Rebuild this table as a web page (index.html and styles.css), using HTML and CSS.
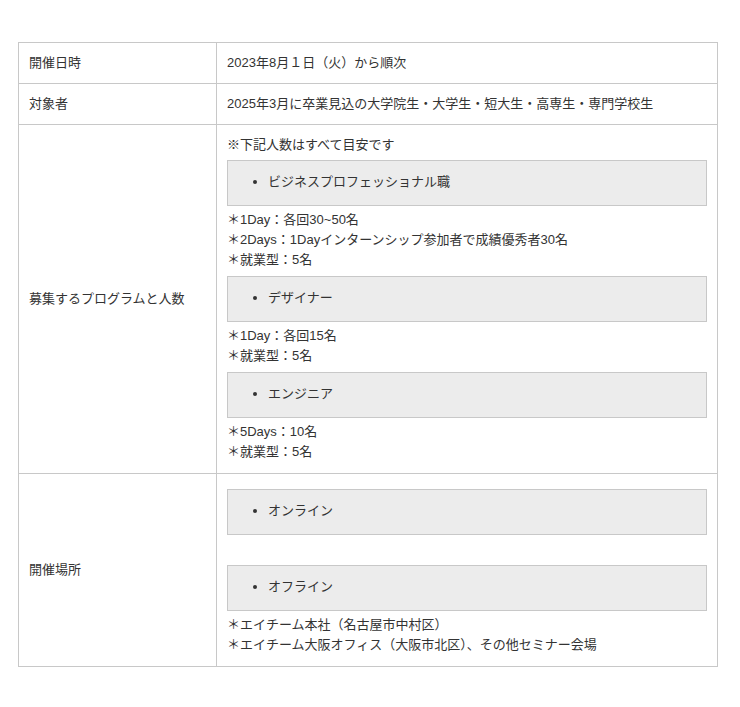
FILE: index.html
```html
<!DOCTYPE html>
<html lang="ja">
<head>
<meta charset="utf-8">
<link rel="stylesheet" href="styles.css">
</head>
<body>
<table class="info">
  <tr>
    <th>開催日時</th>
    <td>2023年8月１日（火）から順次</td>
  </tr>
  <tr>
    <th>対象者</th>
    <td>2025年3月に卒業見込の大学院生・大学生・短大生・高専生・専門学校生</td>
  </tr>
  <tr>
    <th>募集するプログラムと人数</th>
    <td class="rich">
      <p class="note">※下記人数はすべて目安です</p>
      <ul class="box"><li>ビジネスプロフェッショナル職</li></ul>
      <p>＊1Day：各回30~50名<br>＊2Days：1Dayインターンシップ参加者で成績優秀者30名<br>＊就業型：5名</p>
      <ul class="box"><li>デザイナー</li></ul>
      <p>＊1Day：各回15名<br>＊就業型：5名</p>
      <ul class="box"><li>エンジニア</li></ul>
      <p>＊5Days：10名<br>＊就業型：5名</p>
    </td>
  </tr>
  <tr>
    <th>開催場所</th>
    <td class="rich">
      <ul class="box first"><li>オンライン</li></ul>
      <p class="spacer">&nbsp;</p>
      <ul class="box"><li>オフライン</li></ul>
      <p>＊エイチーム本社（名古屋市中村区）<br>＊エイチーム大阪オフィス（大阪市北区）、その他セミナー会場</p>
    </td>
  </tr>
</table>
</body>
</html>
```

FILE: styles.css
```css
html, body {
  margin: 0;
  padding: 0;
  background: #fff;
}
body {
  padding: 42px 18px 0 18px;
  font-family: "Liberation Sans", "Noto Sans CJK JP", sans-serif;
  font-size: 13px;
  line-height: 20px;
  color: #333;
}
.info {
  width: 700px;
  border-collapse: collapse;
}
.info th,
.info td {
  border: 1px solid #c8c8c8;
  padding: 10px;
  text-align: left;
  vertical-align: middle;
  font-weight: normal;
}
.info td.rich {
  padding-bottom: 11px;
}
.info th {
  width: 177px;
}
.info p {
  margin: 0;
}
.box {
  margin: 5px 0 4px;
  padding: 11px 40px 13px;
  background: #ececec;
  border: 1px solid #c8c8c8;
  list-style: disc;
}
.box li {
  line-height: 20px;
}
p + .box {
  margin-top: 6px;
}
.note + .box,
.box.first {
  margin-top: 5px;
}
.spacer {
  line-height: 20px;
}
```
